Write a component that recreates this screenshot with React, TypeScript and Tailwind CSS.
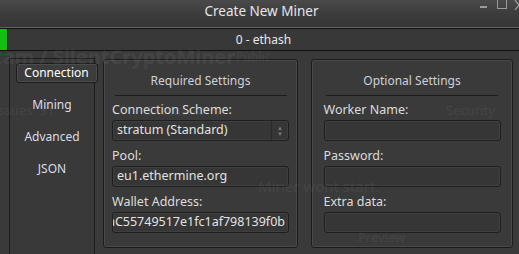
import React from 'react';

const font = { fontFamily: '"Noto Sans", "Open Sans", sans-serif' };

const tabs = ['Connection', 'Mining', 'Advanced', 'JSON'];

const Field: React.FC<{ label: string; value?: string; select?: boolean; clip?: boolean }> = ({ label, value = '', select, clip }) => (
  <div className="flex w-[177px] flex-col">
    <div className="h-[16px] text-[12.5px] leading-[16px] text-[#dcdcdc]">{label}</div>
    <div
      className={`mt-[2px] flex h-[21px] items-center overflow-hidden rounded-[3px] border border-[#1f1f1f] bg-[#363636] shadow-[inset_0_0_0_1px_#3f3f3f] ${clip ? 'justify-end pr-[3px]' : 'pl-[4px]'}`}
    >
      <span className={`${clip ? 'shrink-0' : 'flex-1'} whitespace-nowrap text-[12.5px] text-[#e2e2e2]`}>{value}</span>
      {select && (
        <span className="flex h-full w-[17px] flex-col items-center justify-center border-l border-[#2a2a2a] text-[6px] leading-[6px] text-[#7a7a7a]">
          <span>▲</span>
          <span>▼</span>
        </span>
      )}
    </div>
  </div>
);

const Group: React.FC<{ title: string; children: React.ReactNode; className?: string }> = ({ title, children, className }) => (
  <div className={`flex flex-col items-center rounded-[3px] border border-[#1c1c1c] bg-[#3a3a3a] shadow-[inset_0_0_0_1px_#484848] ${className ?? ''}`}>
    <div className="h-[16px] mt-[13px] text-center text-[12px] leading-[16px] text-[#cfd0d8]">{title}</div>
    <div className="mt-[6px] h-px w-[172px] bg-[#1c1c1c]" />
    <div className="flex flex-col gap-[7px] pt-[6px]">{children}</div>
  </div>
);

export default function App() {
  return (
    <div className="relative h-[254px] w-[519px] overflow-hidden bg-[#3a3a3a]" style={font}>
      {/* Title bar */}
      <div className="relative flex h-[28px] justify-center border-b border-[#626262] bg-gradient-to-b from-[#4a4a4a] via-[#3c3c3c] to-[#353535] pt-[2px]">
        <span className="pl-[4px] text-[13.5px] leading-[18px] text-[#e6e6ec]">Create New Miner</span>
        <div className="absolute left-[480px] top-[6px] h-[2px] w-[7px] bg-[#9a9a9a]" />
        <div className="absolute left-[497px] top-0 h-[9px] w-[10px] border border-[#9a9a9a] border-t-0" />
        <svg width="6" height="10" viewBox="0 0 6 10" className="absolute left-[514px] top-0">
          <path d="M1 0 L5 5 M1 10 L5 5" stroke="#9a9a9a" strokeWidth="1.3" fill="none" />
        </svg>
      </div>

      {/* Progress bar */}
      <div className="flex h-[23px] items-center border-y border-[#121212] bg-[#383838]">
        <div className="h-full w-[7px] bg-[#12c012]" />
        <div className="w-px self-stretch bg-[#121212]" />
        <div className="flex-1 text-center text-[12px] text-[#e8e8e8]">0 - ethash</div>
      </div>

      {/* Body */}
      <div className="flex h-[203px] pl-[9px]">
        {/* Sidebar */}
        <div className="mt-[7px] flex w-[86px] flex-col items-center border-x border-t border-[#1c1c1c] bg-[#393939] pt-[4px]">
          {tabs.map((t, i) => (
            <div
              key={t}
              className={
                i === 0
                  ? 'ml-[9px] flex h-[20px] w-[82px] items-center justify-center rounded-[3px] border border-[#1c1c1c] bg-[#3c3c3c] text-[12px] text-[#ffffff] shadow-[inset_0_0_0_1px_#4c4c4c]'
                  : 'mt-[12px] flex h-[20px] w-full items-center justify-center text-[12px] text-[#dcdce8]'
              }
            >
              {t}
            </div>
          ))}
        </div>

        {/* Groups */}
        <div className="ml-[8px] mt-[8px] mb-[6px] flex gap-[13px]">
          <Group title="Required Settings" className="w-[195px]">
            <Field label="Connection Scheme:" value="stratum (Standard)" select />
            <Field label="Pool:" value="eu1.ethermine.org" />
            <Field label="Wallet Address:" value="0x9aC55749517e1fc1af798139f0b" clip />
          </Group>
          <Group title="Optional Settings" className="w-[202px]">
            <Field label="Worker Name:" />
            <Field label="Password:" />
            <Field label="Extra data:" />
          </Group>
        </div>
      </div>

      {/* Faint background bleed-through */}
      <div className="pointer-events-none absolute inset-0 select-none text-[#ffffff] opacity-[0.05]">
        <span className="absolute left-[-6px] top-[42px] text-[20px] font-bold">tam / SilentCryptoMiner</span>
        <span className="absolute left-[236px] top-[48px] text-[12px]">Public</span>
        <span className="absolute left-[-6px] top-[101px] text-[13px]">Issues&nbsp;&nbsp;31</span>
        <span className="absolute left-[148px] top-[101px] text-[13px]">Discussions</span>
        <span className="absolute left-[446px] top-[101px] text-[13px]">Security</span>
        <span className="absolute left-[258px] top-[175px] text-[15px]">Miner wont start.</span>
        <span className="absolute left-[358px] top-[228px] text-[13px]">Preview</span>
      </div>
    </div>
  );
}
